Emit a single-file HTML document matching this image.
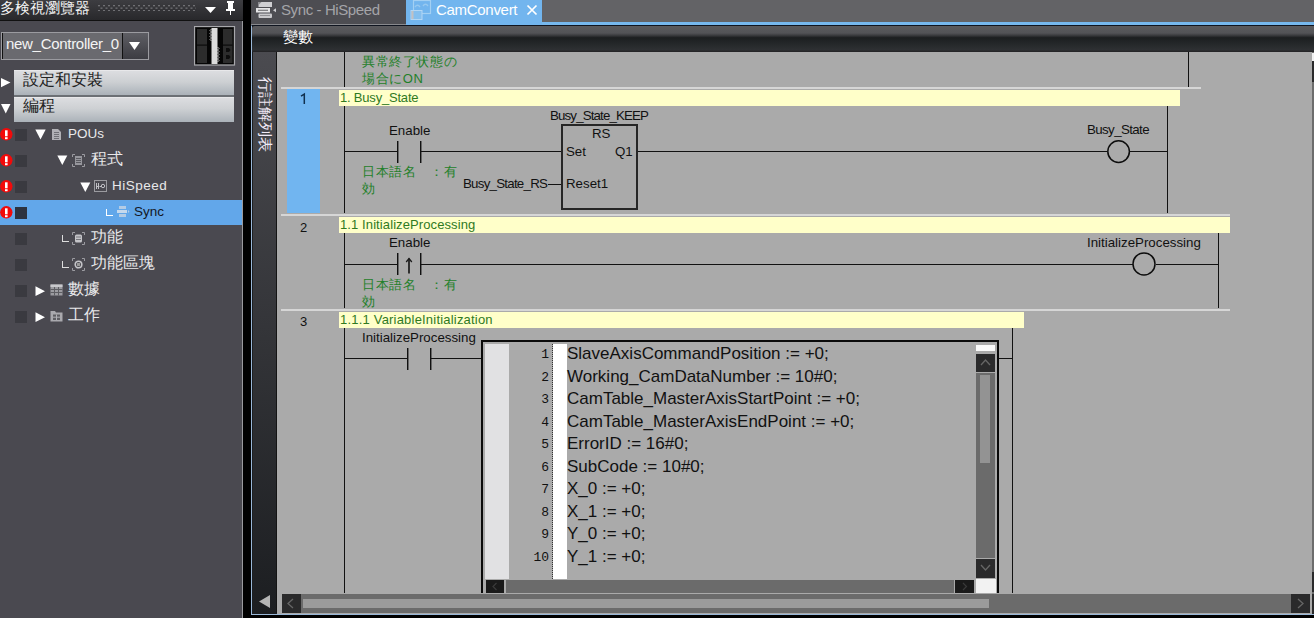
<!DOCTYPE html>
<html><head><meta charset="utf-8">
<style>
*{box-sizing:border-box;margin:0;padding:0}
html,body{width:1314px;height:618px;overflow:hidden;background:#000;font-family:"Liberation Sans",sans-serif}
.a{position:absolute}
.t{position:absolute;white-space:nowrap;line-height:1}
/* left panel */
#lp{left:0;top:0;width:243px;height:618px;background:#4a4950}
#lphdr{left:0;top:0;width:243px;height:21px;background:linear-gradient(#3d3d41,#28282b);border-bottom:1px solid #111}
.row{position:absolute;left:0;width:242px;height:26px}
.err{position:absolute;left:0;top:7px;width:13px;height:13px;border-radius:50%;background:#e0141c;color:#fff;font:bold 10px/13px "Liberation Sans",sans-serif;text-align:center}
.sq{position:absolute;left:15px;width:12px;height:12px;background:#3a3a40}

.tri{position:absolute;color:#fff;font-size:12px;line-height:1}
.lbl{position:absolute;color:#e8e8ea;font-size:14px;line-height:1;white-space:nowrap}
.lbl.cj{font-size:15.5px}
/* editor */
#ed{left:251px;top:0;width:1063px;height:618px}
.wire{position:absolute;background:#111}
.sep{position:absolute;height:2px;background:#d6d6d6}
.ybar{position:absolute;height:16px;background:#ffffc9;color:#2f7a1f;font-size:13px;line-height:16px;padding-left:1px;white-space:nowrap}
.blk{position:absolute;color:#111;font-size:13.3px;line-height:1;white-space:nowrap;margin-top:-1.5px}
.grn{position:absolute;color:#1f8029;font-size:13px;letter-spacing:0.6px;line-height:16.5px;margin-top:2px;white-space:nowrap}
.code{position:absolute;left:567px;color:#111;font-size:17px;line-height:1;white-space:nowrap;margin-top:1px}
.ln{position:absolute;width:40px;left:509px;text-align:right;color:#111;font-family:"Liberation Mono",monospace;font-size:13px;line-height:1}
</style></head><body>
<!-- LEFT PANEL -->
<div id="lp" class="a"></div>
<div id="lphdr" class="a"></div>
<div class="t" style="left:0;top:1px;color:#f4f4f4;font-size:14.6px">多検視瀏覽器</div>
<svg class="a" style="left:98px;top:4px" width="100" height="8"><defs><pattern id="gp" width="5" height="5" patternUnits="userSpaceOnUse"><rect x="0" y="1" width="2" height="1.3" fill="#707074"/><rect x="2.5" y="3.5" width="2" height="1.3" fill="#707074"/></pattern></defs><rect width="98" height="7" fill="url(#gp)"/></svg>
<svg class="a" style="left:205px;top:7px" width="12" height="7"><path d="M0 0H11L5.5 6Z" fill="#fff"/></svg>
<svg class="a" style="left:225px;top:1px" width="11" height="14"><path d="M2 0H9V2H8V8H10V10H6V14H5V10H1V8H3V2H2Z" fill="#fff"/></svg>
<div class="a" style="left:242px;top:21px;width:1px;height:597px;background:#9a9a9e"></div>

<!-- dropdown -->
<div class="a" style="left:1px;top:32px;width:148px;height:28px;border:1px solid #9b9ba0;background:#6a6a6f"></div>
<div class="a" style="left:2px;top:33px;width:1px;height:26px;background:#111"></div>
<div class="a" style="left:122px;top:33px;width:26px;height:26px;background:linear-gradient(#5e5e64,#3c3c42);border-left:1px solid #111"></div>
<svg class="a" style="left:129px;top:42px" width="12" height="9"><path d="M0 0H11L5.5 8Z" fill="#fff"/></svg>
<div class="t" style="left:6px;top:36px;color:#f4f4f4;font-size:15px;letter-spacing:-0.3px">new_Controller_0</div>
<!-- controller image -->
<svg class="a" style="left:194px;top:26px" width="42" height="40">
<rect x="0.5" y="0.5" width="40" height="38.5" fill="#111" stroke="#a8a8ac" stroke-width="1.2"/>
<rect x="2" y="2" width="37" height="36" fill="#050505"/>
<rect x="3" y="3" width="10" height="34" fill="#2c2c2c"/>
<rect x="3" y="18.5" width="10" height="1.2" fill="#0a0a0a"/>
<rect x="17.5" y="2" width="6" height="36" fill="#dcdcdc"/>
<path d="M17.5 3L16 4.5L17.5 6L16 7.5L17.5 9L16 10.5L17.5 12L16 13.5L17.5 15" stroke="#ddd" stroke-width="0.8" fill="none"/>
<path d="M23.5 21L25 22.5L23.5 24L25 25.5L23.5 27L25 28.5L23.5 30L25 31.5L23.5 33L25 34.5L23.5 36" stroke="#ddd" stroke-width="0.8" fill="none"/>
<rect x="29" y="3" width="9.5" height="34" fill="#2c2c2c"/>
<rect x="29" y="18.5" width="9.5" height="1.2" fill="#0a0a0a"/>
<path d="M32 22H35L36.5 24L35 26H32Z M32 29H35L36.5 31L35 33H32Z" fill="#0d0d0d"/>
</svg>
<!-- section bars -->
<svg class="a" style="left:1px;top:78px" width="11" height="10"><path d="M0 0L9.5 4.6L0 9.2Z" fill="#fff"/></svg>
<div class="a" style="left:14px;top:70px;width:220px;height:25px;background:linear-gradient(#dcdde0,#cdd0d3 45%,#abb2b9);border-top:1px solid #e8e8ea"></div>
<div class="a" style="left:14px;top:95px;width:220px;height:2px;background:#6c7075"></div>
<div class="t" style="left:23px;top:72px;color:#222;font-size:16px">設定和安裝</div>
<svg class="a" style="left:1px;top:104px" width="11" height="10"><path d="M0 0H9.5L4.75 9.5Z" fill="#fff"/></svg>
<div class="a" style="left:14px;top:97px;width:220px;height:25px;background:linear-gradient(#dcdde0,#cdd0d3 45%,#abb2b9);border-top:1px solid #e8e8ea"></div>
<div class="t" style="left:23px;top:98px;color:#222;font-size:16px">編程</div>

<!-- tree rows -->
<div class="row" style="top:200px;height:25px;background:#62a7ea"></div>
<!-- row helper: error circle top=128+26n, square top=129+26n -->
<svg class="a" style="left:0;top:128px" width="13" height="13"><circle cx="6.3" cy="6.3" r="6.2" fill="#f20a0a"/><rect x="5" y="2.3" width="2.6" height="6" fill="#fff"/><rect x="5" y="9.2" width="2.6" height="2" fill="#fff"/></svg>
<svg class="a" style="left:0;top:154px" width="13" height="13"><circle cx="6.3" cy="6.3" r="6.2" fill="#f20a0a"/><rect x="5" y="2.3" width="2.6" height="6" fill="#fff"/><rect x="5" y="9.2" width="2.6" height="2" fill="#fff"/></svg>
<svg class="a" style="left:0;top:180px" width="13" height="13"><circle cx="6.3" cy="6.3" r="6.2" fill="#f20a0a"/><rect x="5" y="2.3" width="2.6" height="6" fill="#fff"/><rect x="5" y="9.2" width="2.6" height="2" fill="#fff"/></svg>
<svg class="a" style="left:0;top:206px" width="13" height="13"><circle cx="6.3" cy="6.3" r="6.2" fill="#f20a0a"/><rect x="5" y="2.3" width="2.6" height="6" fill="#fff"/><rect x="5" y="9.2" width="2.6" height="2" fill="#fff"/></svg>
<div class="sq" style="top:129px"></div>
<div class="sq" style="top:155px"></div>
<div class="sq" style="top:181px"></div>
<div class="sq" style="top:207px;background:#2d3340"></div>
<div class="sq" style="top:233px"></div>
<div class="sq" style="top:259px"></div>
<div class="sq" style="top:285px"></div>
<div class="sq" style="top:311px"></div>

<!-- POUs -->
<svg class="a" style="left:35px;top:129px" width="11" height="11"><path d="M0.3 0.5H10.7L5.5 10.5Z" fill="#fff"/></svg>
<svg class="a" style="left:51px;top:128px" width="11" height="13"><path d="M1 1H7L10 4V12H1Z" fill="#b0b0b5"/><path d="M3 4.5H8M3 6.5H8M3 8.5H8M3 10.5H8" stroke="#707076" stroke-width="1"/></svg>
<div class="lbl" style="left:68px;top:127px;font-size:13.5px">POUs</div>

<!-- 程式 -->
<svg class="a" style="left:57px;top:155px" width="11" height="11"><path d="M0.3 0.5H10.3L5.3 10Z" fill="#fff"/></svg>
<svg class="a" style="left:72px;top:154px" width="13" height="13"><path d="M0.5 3V0.5H3M10 0.5H12.5V3M12.5 10V12.5H10M3 12.5H0.5V10" stroke="#9b9ba0" fill="none"/><rect x="3" y="2" width="7" height="9" fill="#96969c"/><path d="M4 4.5H9M4 6.5H9M4 8.5H9" stroke="#5a5a60"/></svg>
<div class="lbl cj" style="left:91px;top:151px">程式</div>

<!-- HiSpeed -->
<svg class="a" style="left:80px;top:182px" width="11" height="11"><path d="M0.3 0.5H10.3L5.3 10Z" fill="#fff"/></svg>
<svg class="a" style="left:94px;top:180px" width="13" height="12"><rect x="0.5" y="0.5" width="12" height="11" fill="none" stroke="#9b9ba0"/><path d="M2.5 3V9M4.5 3V9M2.5 6.5H4.5M5.5 6.5H7" stroke="#c0c0c5"/><circle cx="9" cy="6" r="1.7" fill="none" stroke="#c0c0c5"/></svg>
<div class="lbl" style="left:112px;top:179px;font-size:13.5px;letter-spacing:0.5px">HiSpeed</div>

<!-- Sync -->
<div class="a" style="left:106px;top:209px;width:7px;height:7px;border-left:1px solid #fff;border-bottom:1px solid #fff"></div>
<svg class="a" style="left:116px;top:205px" width="14" height="13" opacity="0.8"><rect x="3" y="1" width="7" height="3" fill="#c9d6e4"/><rect x="1" y="5" width="10" height="3" fill="#dfe6ee"/><path d="M12 5L13.5 6.5L12 8Z" fill="#c9d6e4"/><rect x="3" y="9" width="7" height="3" fill="#c9d6e4"/></svg>
<div class="lbl" style="left:134px;top:205px;color:#141826;font-size:13.5px">Sync</div>

<!-- 功能 -->
<div class="a" style="left:62px;top:235px;width:7px;height:7px;border-left:1px solid #ddd;border-bottom:1px solid #ddd"></div>
<svg class="a" style="left:72px;top:232px" width="13" height="13"><path d="M0.5 3V0.5H3M10 0.5H12.5V3M12.5 10V12.5H10M3 12.5H0.5V10" stroke="#9b9ba0" fill="none"/><rect x="3" y="2.5" width="7" height="8" rx="1.5" fill="#c4c4c8"/><path d="M4 5H9M4 7.5H9" stroke="#77777c"/></svg>
<div class="lbl cj" style="left:91px;top:229px">功能</div>

<!-- 功能區塊 -->
<div class="a" style="left:62px;top:261px;width:7px;height:7px;border-left:1px solid #ddd;border-bottom:1px solid #ddd"></div>
<svg class="a" style="left:72px;top:258px" width="13" height="13"><path d="M0.5 3V0.5H3M10 0.5H12.5V3M12.5 10V12.5H10M3 12.5H0.5V10" stroke="#9b9ba0" fill="none"/><circle cx="6.5" cy="6.5" r="3.3" fill="none" stroke="#c4c4c8" stroke-width="1.6"/><rect x="5" y="5" width="3" height="3" fill="#999"/></svg>
<div class="lbl cj" style="left:91px;top:255px">功能區塊</div>

<!-- 數據 -->
<svg class="a" style="left:35px;top:286px" width="11" height="11"><path d="M0.5 0.3V10L10 5.2Z" fill="#fff"/></svg>
<svg class="a" style="left:50px;top:284px" width="13" height="12"><rect x="0.5" y="0.5" width="12" height="11" fill="#9c9ca1"/><rect x="0.5" y="0.5" width="12" height="2.5" fill="#c8c8cc"/><path d="M0.5 5.5H12.5M0.5 8.5H12.5M4.5 3V11.5M8.5 3V11.5" stroke="#5e5e63"/></svg>
<div class="lbl cj" style="left:68px;top:281px">數據</div>

<!-- 工作 -->
<svg class="a" style="left:35px;top:312px" width="11" height="11"><path d="M0.5 0.3V10L10 5.2Z" fill="#fff"/></svg>
<svg class="a" style="left:50px;top:310px" width="13" height="12"><path d="M0.5 1H5L6 2.5H12.5V11.5H0.5Z" fill="#a9a9ae"/><path d="M3 4.5H10V10H3Z" fill="#5e5e63"/><path d="M3 7.2H10M6.5 4.5V10" stroke="#b0b0b5"/></svg>
<div class="lbl cj" style="left:68px;top:307px">工作</div>

<!-- EDITOR -->
<!-- tab bar -->
<div class="a" style="left:251px;top:0;width:1063px;height:25px;background:#636366"></div>
<div class="a" style="left:251px;top:0;width:155px;height:24px;background:#4d4d52"></div>
<div class="a" style="left:251px;top:22px;width:1063px;height:3px;background:#76b8ee"></div>
<div class="a" style="left:251px;top:22px;width:155px;height:2px;background:#4d4d52"></div>
<div class="a" style="left:251px;top:24px;width:155px;height:1px;background:#88898d"></div>
<div class="a" style="left:406px;top:0;width:136px;height:25px;background:#72b5ee"></div>
<div class="t" style="left:281px;top:2px;color:#a4a4a8;font-size:15px;letter-spacing:-0.4px">Sync - HiSpeed</div>
<svg class="a" style="left:255px;top:1px" width="23" height="18">
<path d="M3.5 1H17V6H3.5L3.5 4.5Z" fill="#cfcfd2"/><path d="M3.5 1L6.5 1L3.5 4Z" fill="#8a8a8e"/>
<rect x="1" y="7" width="14" height="4.5" fill="#e4e4e6"/><rect x="3" y="8.7" width="10" height="1.2" fill="#77777b"/>
<path d="M21 7.3V11.3L18 9.3Z" fill="#cfcfd2"/>
<rect x="3.5" y="12.5" width="13.5" height="4.5" rx="1" fill="#c8c8cb"/><rect x="5" y="14" width="10" height="1" fill="#8f8f93"/>
</svg>
<div class="t" style="left:436px;top:2px;color:#fff;font-size:15px;letter-spacing:-0.3px">CamConvert</div>
<svg class="a" style="left:526px;top:4px" width="12" height="12"><path d="M1.5 1.5L10.5 10.5M10.5 1.5L1.5 10.5" stroke="#fff" stroke-width="1.7"/></svg>
<svg class="a" style="left:410px;top:0;opacity:.7" width="23" height="21">
<rect x="3.5" y="0.5" width="17" height="13" fill="none" stroke="#b9dcf6" stroke-width="1.2"/>
<path d="M5 7Q7.5 3.5 10 7M13 6Q15.5 2.5 18 6" stroke="#a8d2f2" stroke-width="1.4" fill="none"/>
<rect x="1" y="10.5" width="11" height="9" fill="#8ec4ef" stroke="#cfe6f8" stroke-width="1"/>
<rect x="1.5" y="11" width="2" height="8" fill="#e6c6b0"/>
</svg>

<!-- frame -->
<div class="a" style="left:251px;top:25px;width:1063px;height:590px;background:#1c1e21;border-left:1px solid #9ab8d8;border-top:1px solid #101520;border-bottom:1px solid #9ab8d8"></div>
<!-- header -->
<div class="a" style="left:252px;top:26px;width:1062px;height:26px;border-radius:3px 0 0 0;background:linear-gradient(#5a5a5d 0%,#535357 27%,#3a3b3e 36%,#1c1e20 45%,#25282a 70%,#2e3033 92%,#222224 100%)"></div>
<div class="t" style="left:283px;top:30px;color:#fff;font-size:14.5px">變數</div>
<!-- left strip -->
<div class="a" style="left:253px;top:52px;width:23px;height:561px;background:linear-gradient(#4b4b50,#1c1e21)"></div>
<div class="a" style="left:276px;top:52px;width:1px;height:561px;background:#141414"></div>
<div class="t" style="left:257px;top:77px;color:#f2eaf6;font-size:15.3px;transform-origin:0 0;transform:translate(16px,0) rotate(90deg)">行註解列表</div>
<svg class="a" style="left:259px;top:595px" width="12" height="13"><path d="M11 0V13L0 6.5Z" fill="#b5b5b5"/></svg>

<!-- ladder area -->
<div class="a" style="left:277px;top:52px;width:1035px;height:542px;background:#aaaaaa"></div>
<!-- right edge scroll bar sliver -->
<div class="a" style="left:1312px;top:52px;width:2px;height:542px;background:#6c6c6c"></div>
<div class="a" style="left:1312px;top:53px;width:2px;height:8px;background:#f0f0f0"></div>
<div class="a" style="left:1312px;top:61px;width:2px;height:21px;background:#2a2a2b"></div>
<div class="a" style="left:1312px;top:572px;width:2px;height:20px;background:#2a2a2b"></div>

<!-- top fragment -->
<div class="wire" style="left:344px;top:52px;width:1px;height:35px"></div>
<div class="wire" style="left:1188px;top:52px;width:1px;height:35px"></div>
<div class="grn" style="left:362px;top:52px">異常終了状態の<br>場合にON</div>

<!-- rung 1 -->
<div class="sep" style="left:281px;top:87px;width:920px"></div>
<div class="a" style="left:287px;top:89px;width:33px;height:124px;background:#71b5f0"></div>
<svg class="a" style="left:298px;top:92px" width="10" height="14"><path d="M3 4.2L6.3 2.2V12" stroke="#10304f" stroke-width="1.5" fill="none"/></svg>
<div class="ybar" style="left:339px;top:90px;width:841px;letter-spacing:-0.2px">1. Busy_State</div>
<div class="wire" style="left:344px;top:106px;width:1px;height:107px"></div>
<div class="wire" style="left:1167px;top:106px;width:1px;height:107px"></div>
<div class="blk" style="left:389px;top:125px">Enable</div>
<div class="wire" style="left:344px;top:151px;width:54px;height:1px"></div>
<div class="wire" style="left:397px;top:141px;width:1px;height:22px;box-shadow:1px 0 0 rgba(0,0,0,.4)"></div>
<div class="wire" style="left:420px;top:141px;width:1px;height:22px;box-shadow:1px 0 0 rgba(0,0,0,.4)"></div>
<div class="wire" style="left:421px;top:151px;width:141px;height:1px"></div>
<div class="grn" style="left:362px;top:162px">日本語名　：有<br>効</div>
<div class="blk" style="left:550px;top:110px;letter-spacing:-0.85px">Busy_State_KEEP</div>
<div class="a" style="left:561px;top:124px;width:77px;height:86px;border:2px solid #262626"></div>
<div class="blk" style="left:592px;top:128px">RS</div>
<div class="blk" style="left:566px;top:146px">Set</div>
<div class="blk" style="left:615px;top:146px">Q1</div>
<div class="blk" style="left:566px;top:178px">Reset1</div>
<div class="blk" style="left:463px;top:178px;letter-spacing:-0.75px">Busy_State_RS</div>
<div class="wire" style="left:548px;top:184px;width:13px;height:1px"></div>
<div class="wire" style="left:638px;top:151px;width:469px;height:1px"></div>
<svg class="a" style="left:1104px;top:137px" width="30" height="30"><circle cx="14.6" cy="14.6" r="10.8" fill="none" stroke="#0d0d0d" stroke-width="1.5"/></svg>
<div class="wire" style="left:1130px;top:151px;width:37px;height:1px"></div>
<div class="blk" style="left:1087px;top:124px;letter-spacing:-0.6px">Busy_State</div>

<!-- rung 2 -->
<div class="sep" style="left:281px;top:214px;width:949px"></div>
<div class="t" style="left:300px;top:221px;color:#111;font-size:13px">2</div>
<div class="ybar" style="left:339px;top:217px;width:891px;letter-spacing:0.1px">1.1 InitializeProcessing</div>
<div class="wire" style="left:344px;top:233px;width:1px;height:75px"></div>
<div class="wire" style="left:1218px;top:233px;width:1px;height:75px"></div>
<div class="blk" style="left:389px;top:237px">Enable</div>
<div class="wire" style="left:344px;top:264px;width:54px;height:1px"></div>
<div class="wire" style="left:397px;top:253px;width:1px;height:22px;box-shadow:1px 0 0 rgba(0,0,0,.4)"></div>
<div class="wire" style="left:420px;top:253px;width:1px;height:22px;box-shadow:1px 0 0 rgba(0,0,0,.4)"></div>
<svg class="a" style="left:403px;top:255px" width="12" height="20"><path d="M6 3.5V18.5" stroke="#1a1a1a" stroke-width="1.7" fill="none"/><path d="M3.2 7L6 3.6L8.8 7" stroke="#1a1a1a" stroke-width="1.3" fill="none"/></svg>
<div class="wire" style="left:421px;top:264px;width:712px;height:1px"></div>
<svg class="a" style="left:1129px;top:249px" width="30" height="30"><circle cx="15" cy="14.9" r="11" fill="none" stroke="#0d0d0d" stroke-width="1.5"/></svg>
<div class="wire" style="left:1156px;top:264px;width:62px;height:1px"></div>
<div class="blk" style="left:1087px;top:237px">InitializeProcessing</div>
<div class="grn" style="left:362px;top:275px">日本語名　：有<br>効</div>

<!-- rung 3 -->
<div class="sep" style="left:281px;top:309px;width:949px"></div>
<div class="t" style="left:300px;top:315px;color:#111;font-size:13px">3</div>
<div class="ybar" style="left:339px;top:312px;width:685px;letter-spacing:0.2px">1.1.1 VariableInitialization</div>
<div class="wire" style="left:344px;top:328px;width:1px;height:265px"></div>
<div class="wire" style="left:1012px;top:328px;width:1px;height:265px"></div>
<div class="blk" style="left:362px;top:332px">InitializeProcessing</div>
<div class="wire" style="left:344px;top:358px;width:64px;height:1px"></div>
<div class="wire" style="left:407px;top:348px;width:1px;height:22px;box-shadow:1px 0 0 rgba(0,0,0,.4)"></div>
<div class="wire" style="left:430px;top:348px;width:1px;height:22px;box-shadow:1px 0 0 rgba(0,0,0,.4)"></div>
<div class="wire" style="left:431px;top:358px;width:50px;height:1px"></div>
<div class="wire" style="left:999px;top:358px;width:13px;height:1px"></div>

<!-- popup ST editor -->
<div class="a" style="left:481px;top:340px;width:18px;height:253px;background:#000"></div>
<div class="a" style="left:481px;top:340px;width:518px;height:253px;border:2px solid #0a0a0a;border-bottom:none;background:#aaaaaa"></div>
<div class="a" style="left:485px;top:344px;width:24px;height:235px;background:#e1e1e3"></div>
<div class="a" style="left:552px;top:344px;width:1px;height:235px;border-left:1px dotted #333"></div>
<div class="a" style="left:553px;top:344px;width:14px;height:235px;background:#fff"></div>
<div class="ln" style="top:348px">1</div>
<div class="ln" style="top:371px">2</div>
<div class="ln" style="top:393px">3</div>
<div class="ln" style="top:416px">4</div>
<div class="ln" style="top:438px">5</div>
<div class="ln" style="top:461px">6</div>
<div class="ln" style="top:483px">7</div>
<div class="ln" style="top:506px">8</div>
<div class="ln" style="top:528px">9</div>
<div class="ln" style="top:551px">10</div>
<div class="code" style="top:344px">SlaveAxisCommandPosition := +0;</div>
<div class="code" style="top:367px">Working_CamDataNumber := 10#0;</div>
<div class="code" style="top:389px">CamTable_MasterAxisStartPoint := +0;</div>
<div class="code" style="top:412px">CamTable_MasterAxisEndPoint := +0;</div>
<div class="code" style="top:434px">ErrorID := 16#0;</div>
<div class="code" style="top:457px">SubCode := 10#0;</div>
<div class="code" style="top:479px">X_0 := +0;</div>
<div class="code" style="top:502px">X_1 := +0;</div>
<div class="code" style="top:524px">Y_0 := +0;</div>
<div class="code" style="top:547px">Y_1 := +0;</div>
<!-- popup vscroll -->
<div class="a" style="left:976px;top:345px;width:19px;height:6px;background:#fafafa"></div>
<div class="a" style="left:976px;top:354px;width:19px;height:18px;background:#2a2a2b"></div>
<svg class="a" style="left:980px;top:358px" width="11" height="8"><path d="M1 7L5.5 2L10 7" stroke="#666" stroke-width="1.3" fill="none"/></svg>
<div class="a" style="left:976px;top:373px;width:19px;height:185px;background:#6b6b6b"></div>
<div class="a" style="left:980px;top:375px;width:10px;height:88px;background:#939393"></div>
<div class="a" style="left:976px;top:559px;width:19px;height:19px;background:#2a2a2b"></div>
<svg class="a" style="left:980px;top:564px" width="11" height="8"><path d="M1 1L5.5 6L10 1" stroke="#666" stroke-width="1.3" fill="none"/></svg>
<div class="a" style="left:976px;top:579px;width:20px;height:14px;background:#f2f2f2"></div>
<!-- popup hscroll -->
<div class="a" style="left:486px;top:580px;width:18px;height:13px;background:#1a1a1a"></div>
<div class="a" style="left:506px;top:580px;width:448px;height:13px;background:#6b6b6b"></div>
<div class="a" style="left:955px;top:580px;width:19px;height:13px;background:#1a1a1a"></div>
<svg class="a" style="left:486px;top:580px" width="18" height="13"><path d="M10.5 3L7 6.5L10.5 10" stroke="#3a3a3a" stroke-width="1.2" fill="none"/></svg>
<svg class="a" style="left:955px;top:580px" width="19" height="13"><path d="M8 3L11.5 6.5L8 10" stroke="#3a3a3a" stroke-width="1.2" fill="none"/></svg>
<div class="a" style="left:997px;top:340px;width:2px;height:253px;background:#0a0a0a"></div>

<!-- main hscroll -->
<div class="a" style="left:277px;top:593px;width:1035px;height:21px;background:#aaaaaa"></div>
<div class="a" style="left:282px;top:594px;width:1028px;height:19px;background:#6b6b6b"></div>
<div class="a" style="left:282px;top:594px;width:19px;height:19px;background:#2a2a2b"></div>
<svg class="a" style="left:286px;top:598px" width="10" height="11"><path d="M7 1L2 5.5L7 10" stroke="#666" stroke-width="1.3" fill="none"/></svg>
<div class="a" style="left:303px;top:599px;width:686px;height:9px;background:#9b9b9b"></div>
<div class="a" style="left:1291px;top:594px;width:19px;height:19px;background:#2a2a2b"></div>
<svg class="a" style="left:1295px;top:598px" width="10" height="11"><path d="M3 1L8 5.5L3 10" stroke="#666" stroke-width="1.3" fill="none"/></svg>
<div class="a" style="left:1312px;top:594px;width:2px;height:20px;background:#2a2a2b"></div>
</body></html>
